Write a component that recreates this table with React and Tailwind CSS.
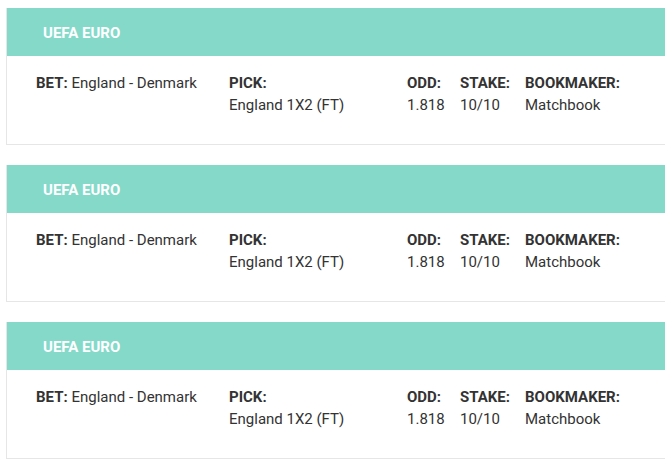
import React from "react";

const bets = [1, 2, 3].map(() => ({
  league: "UEFA EURO",
  bet: "England - Denmark",
  pick: "England 1X2 (FT)",
  odd: "1.818",
  stake: "10/10",
  bookmaker: "Matchbook",
}));

function BetCard({ b }) {
  return (
    <div className="ml-[6px] border-l border-b border-[#e6e6e6] bg-white">
      {/* Header */}
      <div className="h-[48px] bg-[#84d9c9] flex items-center pl-[36px] pt-[2px]">
        <span className="text-white font-bold text-[15px]">{b.league}</span>
      </div>

      {/* Body */}
      <div className="h-[88px] pt-[16px] pl-[29px] flex text-[15px] leading-[22px] text-[#333]">
        <div className="w-[193px]">
          <span className="font-bold">BET:</span> {b.bet}
        </div>
        <div className="w-[178px]">
          <div className="font-bold">PICK:</div>
          <div>{b.pick}</div>
        </div>
        <div className="w-[53px]">
          <div className="font-bold">ODD:</div>
          <div>{b.odd}</div>
        </div>
        <div className="w-[65px]">
          <div className="font-bold">STAKE:</div>
          <div>{b.stake}</div>
        </div>
        <div>
          <div className="font-bold">BOOKMAKER:</div>
          <div>{b.bookmaker}</div>
        </div>
      </div>
    </div>
  );
}

export default function App() {
  return (
    <div
      className="min-h-screen bg-white pt-[8px] flex flex-col gap-[20px] overflow-hidden"
      style={{ fontFamily: "Roboto, 'Liberation Sans', sans-serif" }}
    >
      {bets.map((b, i) => (
        <BetCard key={i} b={b} />
      ))}
    </div>
  );
}
